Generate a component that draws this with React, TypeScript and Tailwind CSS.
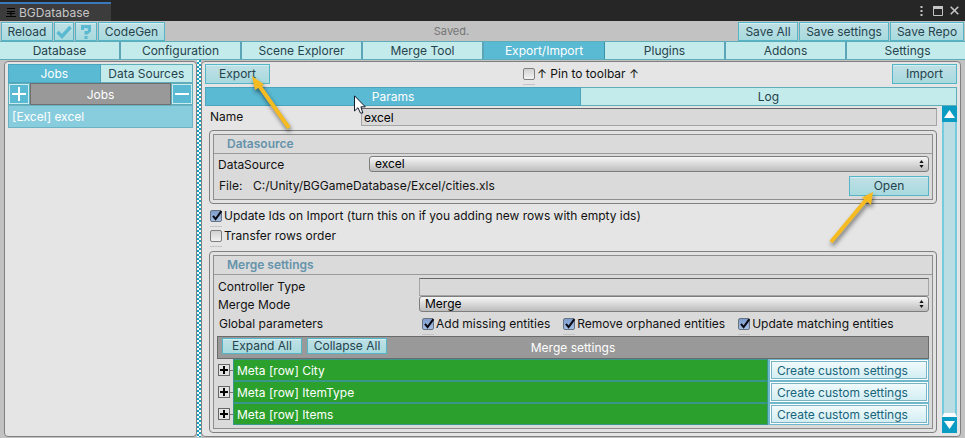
import type { ReactNode } from "react";

const btn =
  "border border-[#55b5c6] bg-linear-to-b from-[#bfe0e5] to-[#a8dade] text-center text-[#26434d] shadow-[inset_0_1px_0_#d2f0f3]";

function CheckMark() {
  return (
    <svg viewBox="0 0 14 14" className="pointer-events-none absolute -top-px left-0 hidden h-[14px] w-[14px] peer-checked:block">
      <path d="M3 6.8 L5.6 10.2 L11.4 2.2" fill="none" stroke="#0a0a14" strokeWidth="2" />
    </svg>
  );
}

function Check({ children, checked = false }: { children: ReactNode; checked?: boolean }) {
  return (
    <label className="flex items-center gap-[2px] whitespace-nowrap">
      <span className="relative h-3 w-3 shrink-0">
        <input
          type="checkbox"
          defaultChecked={checked}
          className="peer block h-3 w-3 appearance-none rounded-[2px] border border-[#808080] bg-linear-to-b from-[#d2d2d2] to-[#f2f2f2] checked:border-[#69737f] checked:from-[#7d9ccc] checked:to-[#a5c0e6]"
        />
        <CheckMark />
        <span className="absolute top-4 left-0 h-px w-3 bg-[#c4c4c4]" />
      </span>
      {children}
    </label>
  );
}

function DropDown({ id, value }: { id: string; value: string }) {
  return (
    <div className="relative flex-1 self-start">
      <select
        id={id}
        className="block h-4 w-full appearance-none rounded-[3px] border border-[#7d7d7d] bg-linear-to-b from-[#f6f6f6] to-[#bdbdbd] px-[5px] leading-[14px] text-black"
      >
        <option>{value}</option>
      </select>
      <svg viewBox="0 0 5 8" className="pointer-events-none absolute top-1 right-[5px] h-2 w-[5px]">
        <path d="M2.5 0 L4.6 3 H0.4 Z M2.5 8 L4.6 5 H0.4 Z" fill="#111" />
      </svg>
    </div>
  );
}

function Group({ title, children }: { title: string; children: ReactNode }) {
  return (
    <section className="rounded-[4px] border border-[#808080] bg-[#e2e2e2] p-[3px]">
      <div className="border border-[#8e8e8e] bg-[#dadada]">
        <h2 className="h-[19px] border-b border-[#9b9b9b] pl-[13px] leading-[18px] font-semibold text-[#6593aa]">
          {title}
        </h2>
        <div className="px-[3px] pt-[2px] pb-[3px]">{children}</div>
      </div>
    </section>
  );
}

function Arrow({ className, tip, tail, head }: { className: string; tip: string; tail: string; head: string }) {
  return (
    <svg viewBox="0 0 50 60" className={"pointer-events-none absolute z-10 h-[60px] w-[50px] overflow-visible drop-shadow-[1px_3px_2px_rgba(0,0,0,0.5)] " + className}>
      <path d={"M" + tail + " L" + tip} stroke="#f6bb20" strokeWidth="4" />
      <path d={head} fill="#f6bb20" />
    </svg>
  );
}

const tabs = ["Database", "Configuration", "Scene Explorer", "Merge Tool", "Export/Import", "Plugins", "Addons", "Settings"];
const metas = ["City", "ItemType", "Items"];

export default function App() {
  return (
    <div className="flex min-h-screen flex-col overflow-x-clip bg-[#c2c2c2] font-['Inter',sans-serif] text-[12px] leading-4 text-[#111]">
      <header className="flex h-[21px] items-end justify-between bg-[#262626]">
        <div className="flex h-[19px] w-[111px] items-center gap-[3px] border-t-2 border-[#3a79bb] bg-[#3c3c3c] pl-[6px] text-[#c6c6c6]">
          <svg viewBox="0 0 10 9" className="h-[9px] w-[10px]" stroke="#050505" fill="none">
            <path d="M1 .5H9 M1 3.5H9 M1 5.5H9 M0 8.5H10 M5 4V8" />
          </svg>
          BGDatabase
        </div>
        <div className="flex h-full items-center gap-[10px] pr-[6px]">
          <svg viewBox="0 0 3 10" className="h-[10px] w-[3px]" fill="#c4c4c4">
            <path d="M.5 0h2v2h-2z M.5 4h2v2h-2z M.5 8h2v2h-2z" />
          </svg>
          <svg viewBox="0 0 10 10" className="h-[10px] w-[10px]">
            <path d="M.5 1V9.5H9.5V1" fill="none" stroke="#c4c4c4" />
            <path d="M0 0H10V3H0Z" fill="#c4c4c4" />
          </svg>
          <svg viewBox="0 0 9 9" className="-ml-[3px] h-[9px] w-[9px]">
            <path d="M.7 .7 L8.3 8.3 M8.3 .7 L.7 8.3" stroke="#c4c4c4" strokeWidth="1.6" />
          </svg>
        </div>
      </header>

      <div className="flex h-5 items-end px-px">
        <div className="flex gap-px">
          <button className={btn + " h-[19px] w-[52px]"}>Reload</button>
          <button aria-label="Apply" className={btn + " flex h-[19px] w-5 items-center justify-center"}>
            <svg viewBox="0 0 16 14" className="h-[14px] w-4">
              <path d="M1.5 7 L6 11.5 L14.5 2" fill="none" stroke="#5bb9d2" strokeWidth="3.4" />
            </svg>
          </button>
          <button aria-label="Help" className={btn + " flex h-[19px] w-[22px] items-center justify-center"}>
            <svg viewBox="0 0 12 15" className="h-[15px] w-3" fill="#5bb9d2">
              <path d="M1 1H11V7.5L7.5 10.5H4.5V7H7.8V4.2H4V6H1Z M4.5 12H7.5V15H4.5Z" />
            </svg>
          </button>
          <button className={btn + " h-[19px] w-[67px]"}>CodeGen</button>
        </div>
        <span className="flex-1 self-center text-center text-[11px] text-[#757575]">Saved.</span>
        <div className="flex justify-end gap-px">
          <button className={btn + " h-[19px] w-[60px]"}>Save All</button>
          <button className={btn + " h-[19px] w-[90px]"}>Save settings</button>
          <button className={btn + " h-[19px] w-[74px]"}>Save Repo</button>
        </div>
      </div>

      <nav className="-mr-[3px] grid h-[19px] grid-cols-8 border-y border-[#5fadb9]">
        {tabs.map((t) => (
          <button
            key={t}
            className={
              t === "Export/Import"
                ? "border-r border-[#3a93ab] bg-[#5ab9d3] text-white"
                : "border-r-2 border-[#5ba5b8] bg-[#c4ebeb] text-[#26434d] last:border-r-0"
            }
          >
            {t}
          </button>
        ))}
      </nav>

      <div className="flex flex-1 pr-1 pb-[2px] pl-1">
        <aside className="mt-px w-[193px] rounded-[4px] border border-[#808080] bg-[#e5e5e5] p-[3px] pt-[2px]">
          <div className="grid grid-cols-2 text-[#26434d]">
            <button className="h-[19px] border border-[#4aa5bd] bg-[#5ab9d3] text-white">Jobs</button>
            <button className="h-[19px] border border-l-0 border-[#5fadb9] bg-[#c4ebeb]">Data Sources</button>
          </div>
          <div className="flex h-[22px] text-white">
            <button aria-label="Add" className="flex w-[22px] items-center justify-center border border-[#5fadb9] bg-[#5ab9d3] shadow-[inset_0_0_0_1px_#c9ecf0]">
              <svg viewBox="0 0 14 14" className="h-[14px] w-[14px]" stroke="white" strokeWidth="2">
                <path d="M0 7H14M7 0V14" />
              </svg>
            </button>
            <div className="flex-1 border border-[#6f6f6f] bg-[#999] text-center leading-[22px]">Jobs</div>
            <button aria-label="Remove" className="flex w-[22px] items-center justify-center border border-[#5fadb9] bg-[#5ab9d3] shadow-[inset_0_0_0_1px_#c9ecf0]">
              <svg viewBox="0 0 14 14" className="h-[14px] w-[14px]" stroke="white" strokeWidth="2">
                <path d="M0 7H14" />
              </svg>
            </button>
          </div>
          <button className="block h-[23px] w-full border border-[#6db2c3] bg-[#88cddd] pl-[3px] text-left text-white">[Excel] excel</button>
        </aside>

        <div className="w-1 bg-[#f2ffff] bg-[conic-gradient(#189fc0_25%,transparent_0_50%,#189fc0_0_75%,transparent_0)] bg-size-[4px_4px]" />

        <main className="relative mt-px flex-1 rounded-[4px] border border-[#808080] bg-[#e5e5e5] p-[3px] pt-[2px]">
          <div className="flex items-center justify-between">
            <div className="relative">
              <button className={btn + " block h-5 w-[65px]"}>Export</button>
              <Arrow className="top-3 left-[47px]" tip="6,8" tail="37,52" head="M0 0 L12 8.5 L3 14 Z" />
            </div>
            <Check>↑ Pin to toolbar ↑</Check>
            <button className={btn + " h-5 w-[65px]"}>Import</button>
          </div>
          <div className="relative mt-[3px] grid grid-cols-2 text-[#26434d]">
            <button className="h-[19px] border border-[#4aa5bd] bg-[#5ab9d3] text-white">Params</button>
            <button className="h-[19px] border border-l-0 border-[#5fadb9] bg-[#c4ebeb]">Log</button>
            <svg viewBox="0 0 12 19" className="pointer-events-none absolute top-2 left-[149px] z-10 h-[19px] w-3">
              <path d="M.5 .8V16L4 12.7L6.4 18H8.8L6.9 11.8H11.3Z" fill="white" stroke="#111c2c" />
            </svg>
          </div>

          <div className="flex gap-[5px]">
            <div className="flex-1 pt-[2px] pl-1">
              <div className="flex h-[18px] items-center">
                <label htmlFor="name" className="w-[152px] pl-px">Name</label>
                <input
                  id="name"
                  defaultValue="excel"
                  className="h-[18px] min-w-0 flex-1 border border-[#a5a5a5] border-t-[#666] bg-[#d9d9d9] px-[2px] text-black"
                />
              </div>

              <div className="mt-1">
                <Group title="Datasource">
                  <div className="flex h-[18px] items-center pl-px">
                    <label htmlFor="source" className="w-[151px]">DataSource</label>
                    <DropDown id="source" value="excel" />
                  </div>
                  <div className="mt-[2px] flex items-center pl-[2px]">
                    <span className="w-[34px]">File:</span>
                    <span className="flex-1">C:/Unity/BGGameDatabase/Excel/cities.xls</span>
                    <div className="relative">
                      <button className={btn + " block h-5 w-20"}>Open</button>
                      <Arrow className="top-4 -left-[20px]" tip="37,8" tail="2,50" head="M44 0 L33 5.5 L42 13 Z" />
                    </div>
                  </div>
                </Group>
              </div>

              <div className="mt-[2px] flex h-5 items-center pl-px">
                <Check checked>Update Ids on Import (turn this on if you adding new rows with empty ids)</Check>
              </div>
              <div className="flex h-5 items-center pl-px">
                <Check>Transfer rows order</Check>
              </div>

              <div className="mt-[5px]">
                <Group title="Merge settings">
                  <div className="flex h-[19px] items-center pl-px">
                    <label htmlFor="controller" className="w-[201px]">Controller Type</label>
                    <input id="controller" className="h-[18px] min-w-0 flex-1 border border-[#a5a5a5] border-t-[#666] bg-[#d9d9d9] px-[2px]" />
                  </div>
                  <div className="flex h-[18px] items-center pl-px">
                    <label htmlFor="mode" className="w-[201px]">Merge Mode</label>
                    <DropDown id="mode" value="Merge" />
                  </div>
                  <div className="mt-px mb-[3px] flex h-[18px] items-center pl-[2px]">
                    <span className="w-[203px]">Global parameters</span>
                    <div className="flex gap-[13px]">
                      <Check checked>Add missing entities</Check>
                      <Check checked>Remove orphaned entities</Check>
                      <Check checked>Update matching entities</Check>
                    </div>
                  </div>
                  <div className="grid h-[23px] grid-cols-[1fr_auto_1fr] border border-[#6b6b6b] bg-[#999] px-1 pt-px text-white">
                    <div className="flex gap-[5px] leading-[14px]">
                      <button className={btn + " h-4 w-20"}>Expand All</button>
                      <button className={btn + " h-4 w-20"}>Collapse All</button>
                    </div>
                    <span className="self-center">Merge settings</span>
                  </div>
                  {metas.map((m) => (
                    <div key={m} className="flex h-[22px]">
                      <div className="flex w-4 items-center pl-px">
                        <button aria-label={"Expand " + m} className="flex h-3 w-3 items-center justify-center border border-[#666] bg-[#e2e2e2]">
                          <svg viewBox="0 0 8 8" className="h-2 w-2" stroke="black" strokeWidth="2">
                            <path d="M0 4H8M4 0V8" />
                          </svg>
                        </button>
                        <span className="h-px flex-1 bg-[#777]" />
                      </div>
                      <div className="flex-1 border border-[#38968a] bg-[#2ca02d] pl-[3px] leading-[22px] text-white">Meta [row] {m}</div>
                      <div className="w-[161px] border border-l-2 border-[#6db8cb] bg-white p-px">
                        <button className="block h-[18px] w-full border border-[#79b4c4] bg-linear-to-b from-[#f0fafc] to-[#d3eef4] pl-[5px] text-left leading-[18px] text-[#17647a]">
                          Create custom settings
                        </button>
                      </div>
                    </div>
                  ))}
                </Group>
              </div>
            </div>

            <div className="flex w-[15px] flex-col">
              <button aria-label="Scroll up" className="flex h-4 items-center justify-center bg-[#0a9cc2]">
                <svg viewBox="0 0 11 8" className="h-2 w-[11px]" fill="white"><path d="M5.5 0L11 8H0Z" /></svg>
              </button>
              <div className="flex-1 border-x-2 border-b-4 border-x-[#75cade] border-b-white bg-[#b9dde2]" />
              <button aria-label="Scroll down" className="flex h-4 items-center justify-center bg-[#0a9cc2]">
                <svg viewBox="0 0 11 8" className="h-2 w-[11px]" fill="white"><path d="M5.5 8L11 0H0Z" /></svg>
              </button>
            </div>
          </div>
        </main>
      </div>
    </div>
  );
}
